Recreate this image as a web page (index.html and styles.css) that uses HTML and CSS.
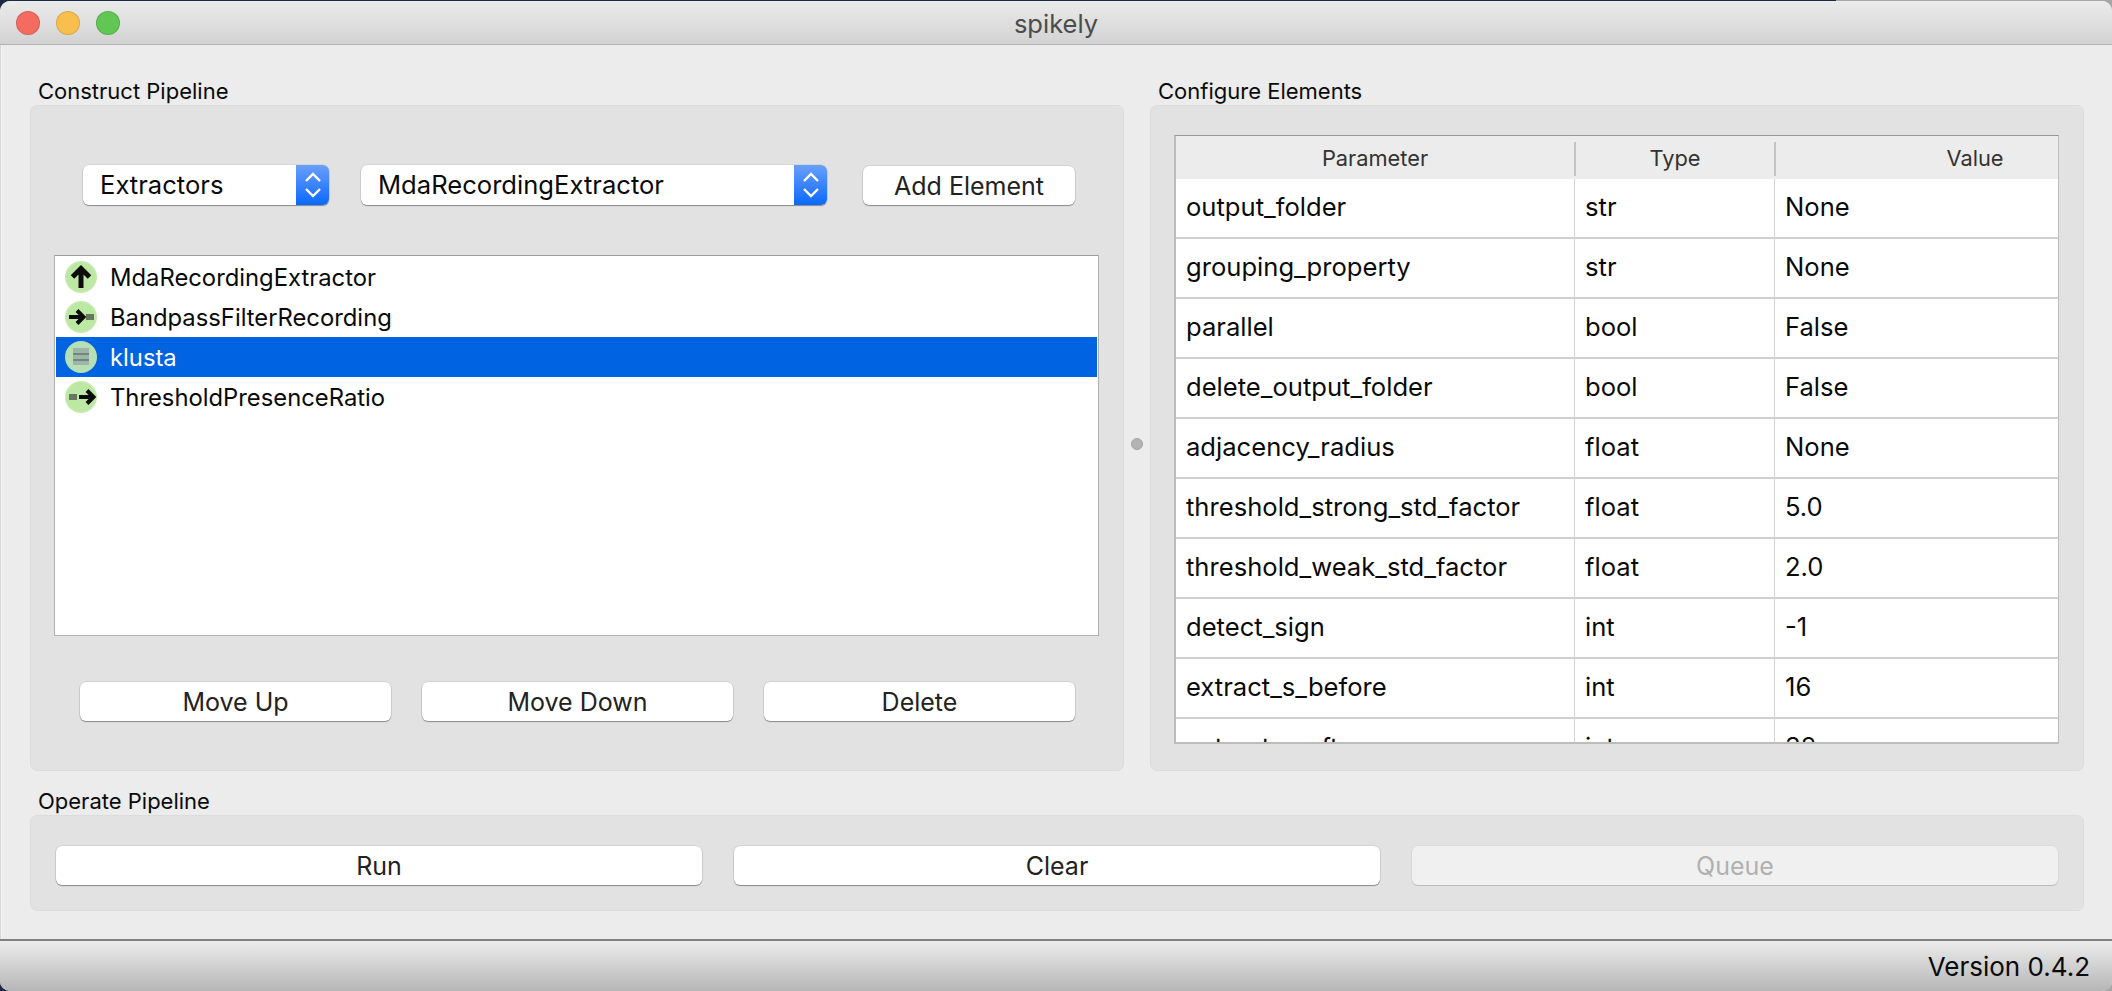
FILE: index.html
```html
<!DOCTYPE html>
<html lang="en">
<head>
<meta charset="utf-8">
<title>spikely</title>
<link rel="stylesheet" href="styles.css">
</head>
<body>
<div class="window">
  <header class="titlebar">
    <div class="lights">
      <span class="light red"></span>
      <span class="light yellow"></span>
      <span class="light green"></span>
    </div>
    <div class="title">spikely</div>
  </header>
  <main class="content">
    <div class="top">
      <section class="group">
        <div class="group-label">Construct Pipeline</div>
        <div class="panel construct">
          <div class="combo-row">
            <div class="combo combo-a"><span class="combo-text">Extractors</span><span class="stepper"><svg width="18" height="30" viewBox="0 0 18 30"><path d="M2 11l7-7 7 7M2 19l7 7 7-7" fill="none" stroke="#fff" stroke-width="2.4"/></svg></span></div>
            <div class="combo combo-b"><span class="combo-text">MdaRecordingExtractor</span><span class="stepper"><svg width="18" height="30" viewBox="0 0 18 30"><path d="M2 11l7-7 7 7M2 19l7 7 7-7" fill="none" stroke="#fff" stroke-width="2.4"/></svg></span></div>
            <button class="btn btn-add">Add Element</button>
          </div>
          <div class="list">
            <div class="item">
              <svg class="icon" viewBox="0 0 32 32"><circle cx="16" cy="16" r="16" fill="#c4ebae"/><circle cx="16" cy="16" r="14.500" fill="#bce8a4"/><path d="M16 27V8M7.500 16L16 7.500 24.500 16" fill="none" stroke="#0c0c0c" stroke-width="5"/></svg>
              <span>MdaRecordingExtractor</span>
            </div>
            <div class="item">
              <svg class="icon" viewBox="0 0 32 32"><circle cx="16" cy="16" r="16" fill="#c4ebae"/><circle cx="16" cy="16" r="14.500" fill="#bce8a4"/><path d="M4 16h14M12 9.500l6.500 6.500-6.500 6.500" fill="none" stroke="#0c0c0c" stroke-width="4"/><path d="M21 13h8v6h-8z" fill="#66785f"/></svg>
              <span>BandpassFilterRecording</span>
            </div>
            <div class="item selected">
              <svg class="icon" viewBox="0 0 32 32"><circle cx="16" cy="16" r="16" fill="#b7dfb6"/><path d="M8 7h16v17H8z" fill="#9db5a6"/><path d="M8 12h16v2H8zM8 18h16v2H8z" fill="#6e8780"/></svg>
              <span>klusta</span>
            </div>
            <div class="item">
              <svg class="icon" viewBox="0 0 32 32"><circle cx="16" cy="16" r="16" fill="#c4ebae"/><circle cx="16" cy="16" r="14.500" fill="#bce8a4"/><path d="M4 13h8v6H4z" fill="#66785f"/><path d="M14 16h14M22 9.500l6.500 6.500-6.500 6.500" fill="none" stroke="#0c0c0c" stroke-width="4"/></svg>
              <span>ThresholdPresenceRatio</span>
            </div>
          </div>
          <div class="button-row">
            <button class="btn">Move Up</button>
            <button class="btn">Move Down</button>
            <button class="btn">Delete</button>
          </div>
        </div>
      </section>
      <div class="splitter"><span class="handle"></span></div>
      <section class="group">
        <div class="group-label">Configure Elements</div>
        <div class="panel configure">
          <div class="table-box">
            <div class="thead">
              <div class="th">Parameter</div>
              <div class="th">Type</div>
              <div class="th th-value">Value</div>
            </div>
            <div class="tr"><div class="td">output_folder</div><div class="td">str</div><div class="td">None</div></div>
            <div class="tr"><div class="td">grouping_property</div><div class="td">str</div><div class="td">None</div></div>
            <div class="tr"><div class="td">parallel</div><div class="td">bool</div><div class="td">False</div></div>
            <div class="tr"><div class="td">delete_output_folder</div><div class="td">bool</div><div class="td">False</div></div>
            <div class="tr"><div class="td">adjacency_radius</div><div class="td">float</div><div class="td">None</div></div>
            <div class="tr"><div class="td">threshold_strong_std_factor</div><div class="td">float</div><div class="td">5.0</div></div>
            <div class="tr"><div class="td">threshold_weak_std_factor</div><div class="td">float</div><div class="td">2.0</div></div>
            <div class="tr"><div class="td">detect_sign</div><div class="td">int</div><div class="td">-1</div></div>
            <div class="tr"><div class="td">extract_s_before</div><div class="td">int</div><div class="td">16</div></div>
            <div class="tr"><div class="td">extract_s_after</div><div class="td">int</div><div class="td">32</div></div>
          </div>
        </div>
      </section>
    </div>
    <section class="group operate">
      <div class="group-label">Operate Pipeline</div>
      <div class="panel operate-panel">
        <button class="btn">Run</button>
        <button class="btn">Clear</button>
        <button class="btn disabled">Queue</button>
      </div>
    </section>
  </main>
  <footer class="statusbar">Version 0.4.2</footer>
</div>
</body>
</html>
```
FILE: styles.css
```css
* { box-sizing: border-box; }
html, body { margin: 0; height: 100%; overflow: hidden; }
body { font-family: Inter, "Liberation Sans", sans-serif; color: #0a0a0a; background: linear-gradient(to right, #1c2a44 1836px, #a6a6a6 1836px); }
.window { width: 2112px; height: 990px; margin-top: 1px; display: flex; flex-direction: column; background: #ececec; border-radius: 10px; overflow: hidden; }
.titlebar { height: 44px; flex: none; display: flex; align-items: center; position: relative; background: linear-gradient(#ebebeb, #d2d2d2); border-bottom: 1px solid #b2b2b2; }
.lights { display: flex; gap: 16px; padding-left: 16px; }
.light { width: 24px; height: 24px; border-radius: 50%; border: 1px solid rgba(0,0,0,.12); }
.red { background: #f46b60; }
.yellow { background: #f9bf4e; }
.green { background: #62c655; }
.title { position: absolute; left: 0; right: 0; padding-top: 1px; text-align: center; font-size: 25.500px; color: #4c4c4c; }
.content { flex: 1; display: flex; flex-direction: column; padding: 32px 28px 0 30px; box-shadow: inset 1px 0 #d6d6d6, inset 2px 0 #f4f4f4; }
.top { display: flex; height: 694px; }
.group { display: flex; flex-direction: column; }
.group-label { height: 28px; padding: 1px 0 0 8px; font-size: 22px; line-height: 26px; white-space: nowrap; }
.panel { background: #e2e2e2; border: 1px solid #dcdcdc; border-radius: 7px; }
.construct { width: 1094px; height: 666px; padding: 59px 23px 0 23px; display: flex; flex-direction: column; }
.combo-row { display: flex; align-items: flex-start; height: 90px; padding-left: 29px; }
.combo { height: 40px; background: #fff; border-radius: 6px; display: flex; justify-content: space-between; box-shadow: 0 1px 1px rgba(0,0,0,.35), 0 0 0 .5px rgba(0,0,0,.12); font-size: 25.600px; line-height: 39px; overflow: hidden; }
.combo-a { width: 246px; }
.combo-b { width: 466px; margin-left: 32px; }
.combo-text { padding-left: 17px; white-space: nowrap; }
.stepper { width: 33px; background: linear-gradient(#6a9ffb, #0a68fd); display: flex; align-items: center; justify-content: center; }
.btn { font: inherit; font-size: 25px; color: #222; height: 39px; padding: 0; background: #fff; border: 0; border-radius: 6px; box-shadow: 0 1px 1px rgba(0,0,0,.35), 0 0 0 .5px rgba(0,0,0,.14); }
.btn-add { width: 212px; margin-left: 36px; margin-top: 1px; }
.list { width: 1045px; height: 381px; background: #fff; border: 1px solid #b0b0b0; border-top-color: #9e9e9e; padding: 1px; }
.item { height: 40px; display: flex; align-items: center; gap: 13px; padding-left: 9px; font-size: 23.800px; white-space: nowrap; }
.item.selected { background: #0063e1; color: #fff; }
.icon { width: 32px; height: 32px; flex: none; }
.button-row { display: flex; gap: 31px; margin-top: 46px; padding-left: 26px; }
.button-row .btn { width: 311px; }
.splitter { width: 26px; display: flex; align-items: center; justify-content: center; padding-top: 40px; }
.handle { width: 12px; height: 12px; border-radius: 50%; background: #b4b4b4; border: 1px solid #a4a4a4; }
.configure { width: 934px; height: 666px; padding: 29px 24px 0 23px; }
.table-box { width: 885px; height: 609px; overflow: hidden; background: #fff; border: 2px solid #bcbcbc; border-top: 1px solid #989898; border-right-width: 1px; }
.thead { display: grid; grid-template-columns: 398px 200px 1fr; height: 43px; background: #ececec; align-items: center; padding-top: 2px; }
.tr { display: grid; grid-template-columns: 399px 200px 1fr; height: 60px; }
.th { height: 34px; line-height: 32px; text-align: center; font-size: 21.800px; color: #333; border-left: 2px solid #c4c4c4; }
.th:first-child { border-left: 0; }
.th-value { padding-left: 116px; }
.td { height: 60px; line-height: 56px; padding-left: 10px; font-size: 25.600px; border-right: 1px solid #d4d4d4; border-bottom: 2px solid #d0d0d0; white-space: nowrap; }
.td:last-child { border-right: 0; }
.operate { margin-top: 16px; }
.operate-panel { width: 2054px; height: 96px; padding: 30px 25px 0 25px; display: grid; grid-template-columns: repeat(3, 1fr); gap: 32px; align-items: start; }
.disabled { background: #f0f0f0; color: #b0b0b0; box-shadow: 0 1px 1px rgba(0,0,0,.15), 0 0 0 .5px rgba(0,0,0,.06); }
.statusbar { margin-top: auto; height: 52px; flex: none; background: linear-gradient(#ececec, #b6b6b6); border-top: 2px solid #808080; text-align: right; padding: 2px 22px 0 0; font-size: 26px; line-height: 48px; }
```
